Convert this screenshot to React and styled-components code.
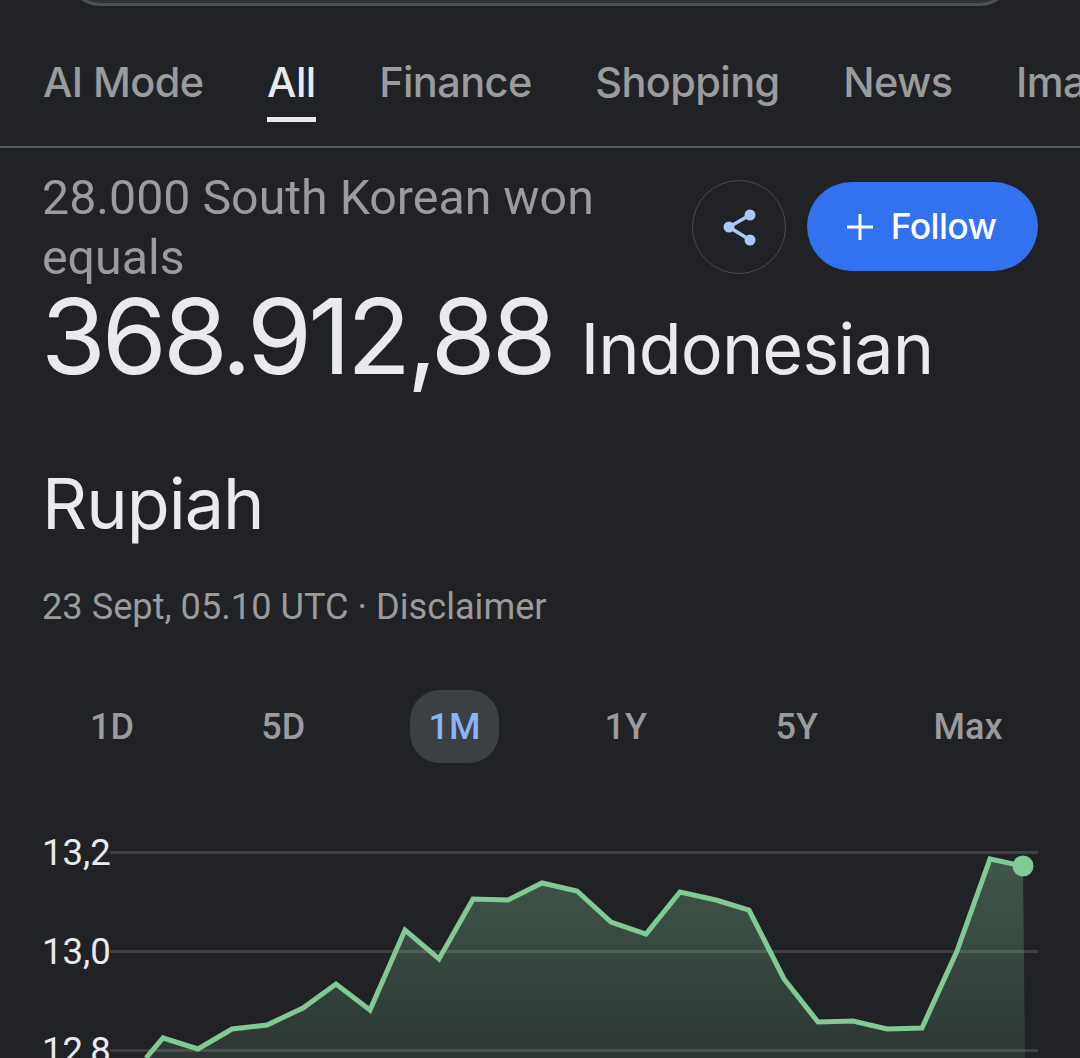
import styled, { createGlobalStyle } from "styled-components";

const tabs = ["AI Mode", "All", "Finance", "Shopping", "News", "Images"];
const ranges = ["1D", "5D", "1M", "1Y", "5Y", "Max"];
const axisLabels = ["13,2", "13,0", "12,8"];

const points = [
  [146, 1057], [163, 1037], [198, 1048], [232, 1028], [267, 1024], [303, 1007],
  [336, 983], [370, 1009], [405, 929], [439, 958], [473, 898], [508, 899],
  [542, 882], [577, 890], [611, 921], [646, 933], [680, 891], [716, 899],
  [749, 909], [784, 978], [818, 1021], [853, 1020], [887, 1028], [922, 1027],
  [957, 950], [990, 858], [1023, 865],
];

// chart svg starts at y=820
const linePoints = points.map(([x, y]) => `${x},${y - 820}`).join(" ");
const areaPoints = `146,238 ${linePoints} 1025,238`;

function ShareIcon() {
  return (
    <svg width="36" height="40" viewBox="0 0 36 40" fill="#a8c7fa">
      <path d="M8 20 L29 8 M8 20 L29 33" stroke="#a8c7fa" strokeWidth="3.5" fill="none" />
      <circle cx="8" cy="20" r="5.5" />
      <circle cx="29" cy="8" r="5.5" />
      <circle cx="29" cy="33" r="5.5" />
    </svg>
  );
}

function PlusIcon() {
  return (
    <svg width="26" height="26" viewBox="0 0 26 26">
      <path d="M13 0 V26 M0 13 H26" stroke="#fff" strokeWidth="3" />
    </svg>
  );
}

function App() {
  return (
    <Page>
      <GlobalStyle />
      <SearchBox />

      <TabBar>
        {tabs.map((tab) => (
          <Tab key={tab} $active={tab === "All"}>
            {tab}
          </Tab>
        ))}
      </TabBar>

      <Content>
        <Header>
          <Subtitle>28.000 South Korean won equals</Subtitle>
          <Actions>
            <ShareButton>
              <ShareIcon />
            </ShareButton>
            <FollowButton>
              <PlusIcon />
              Follow
            </FollowButton>
          </Actions>
        </Header>

        <Result>
          <Amount>368.912,88</Amount> <Currency>Indonesian Rupiah</Currency>
        </Result>

        <Timestamp>23 Sept, 05.10 UTC · Disclaimer</Timestamp>
      </Content>

      <RangeRow>
        {ranges.map((range) => (
          <RangeCell key={range}>
            <RangeItem $active={range === "1M"}>{range}</RangeItem>
          </RangeCell>
        ))}
      </RangeRow>

      <Chart>
        <AxisRows>
          {axisLabels.map((label) => (
            <AxisRow key={label}>
              <AxisLabel>{label}</AxisLabel>
              <GridLine />
            </AxisRow>
          ))}
        </AxisRows>
        <Plot width="1080" height="238" viewBox="0 0 1080 238">
          <defs>
            <linearGradient id="area" x1="0" y1="0" x2="0" y2="1">
              <stop offset="0" stopColor="#81c995" stopOpacity="0.32" />
              <stop offset="1" stopColor="#81c995" stopOpacity="0.12" />
            </linearGradient>
          </defs>
          <polygon points={areaPoints} fill="url(#area)" />
          <polyline points={linePoints} fill="none" stroke="#81c995" strokeWidth="5" strokeLinejoin="miter" />
          <circle cx="1023" cy="45" r="10.5" fill="#81c995" />
        </Plot>
      </Chart>
    </Page>
  );
}

export default App;

const GlobalStyle = createGlobalStyle`
  html, body {
    margin: 0;
    height: 100%;
    background: #212226;
    overflow: hidden;
  }
`;

const Page = styled.div`
  width: 1080px;
  height: 1058px;
  overflow: hidden;
  background: #212226;
  font-family: Roboto, sans-serif;
`;

const SearchBox = styled.div`
  height: 40px;
  margin: -34px 65px 0 65px;
  box-sizing: border-box;
  background: #303236;
  border: 3px solid #4b4e52;
  border-radius: 0 0 36px 36px;
`;

const TabBar = styled.div`
  display: flex;
  gap: 63.5px;
  height: 142px;
  box-sizing: border-box;
  padding: 0 0 0 43px;
  border-bottom: 2px solid #55585c;
  overflow: hidden;
  white-space: nowrap;
`;

const Tab = styled.div`
  position: relative;
  padding-top: 51px;
  font-family: Inter, sans-serif;
  font-size: 41.5px;
  line-height: 50px;
  letter-spacing: -0.6px;
  font-weight: 500;
  color: ${(p) => (p.$active ? "#e8eaed" : "#9a9b9d")};

  &::after {
    content: "";
    display: ${(p) => (p.$active ? "block" : "none")};
    position: absolute;
    left: 0;
    right: 0;
    bottom: 24px;
    height: 5px;
    background: #e8eaed;
  }
`;

const Content = styled.div`
  padding: 0 42px;
`;

const Header = styled.div`
  display: flex;
  justify-content: space-between;
  padding-top: 20px;
`;

const Subtitle = styled.div`
  width: 600px;
  font-size: 48.3px;
  line-height: 60px;
  color: #9a9b9d;
`;

const Actions = styled.div`
  display: flex;
  align-items: flex-start;
  gap: 21px;
  padding-top: 12px;
`;

const ShareButton = styled.div`
  width: 94px;
  height: 94px;
  box-sizing: border-box;
  border: 1.5px solid #4a4c50;
  border-radius: 50%;
  display: flex;
  align-items: center;
  justify-content: center;
`;

const FollowButton = styled.div`
  width: 229px;
  height: 89px;
  margin-top: 2px;
  padding-right: 2px;
  border-radius: 45px;
  background: #3271f0;
  color: #fff;
  display: flex;
  align-items: center;
  justify-content: center;
  gap: 18px;
  font-family: Inter, sans-serif;
  font-size: 35.5px;
  font-weight: 500;
  letter-spacing: -0.6px;
`;

const Result = styled.div`
  margin-top: -17px;
  color: #e8eaed;
  font-family: Inter, sans-serif;
  font-size: 70.2px;
  line-height: 155px;
`;

const Amount = styled.span`
  font-size: 105px;
  line-height: 1;
  letter-spacing: -4px;
  margin-left: -1px;
`;

const Currency = styled.span`
  font-size: 70.2px;
  letter-spacing: -1px;
  margin-left: 8px;
`;

const Timestamp = styled.div`
  margin-top: 1px;
  font-size: 36.2px;
  line-height: 50px;
  color: #9a9b9d;
`;

const RangeRow = styled.div`
  display: grid;
  grid-template-columns: repeat(6, 171.2px);
  padding: 58px 0 0 26.5px;
`;

const RangeCell = styled.div`
  display: flex;
  justify-content: center;
`;

const RangeItem = styled.div`
  width: 89px;
  height: 73px;
  border-radius: 30px;
  display: flex;
  align-items: center;
  justify-content: center;
  font-size: 36px;
  font-weight: 500;
  background: ${(p) => (p.$active ? "#3c4043" : "transparent")};
  color: ${(p) => (p.$active ? "#8ab4f8" : "#9a9b9d")};
`;

const Chart = styled.div`
  position: relative;
  margin-top: 58px;
  height: 238px;
`;

const AxisRows = styled.div`
  display: flex;
  flex-direction: column;
  padding: 6px 42px 0 42px;
`;

const AxisRow = styled.div`
  display: flex;
  align-items: center;
  height: 50px;
  margin-bottom: 49px;
`;

const AxisLabel = styled.div`
  width: 68px;
  font-size: 36.6px;
  color: #e8eaed;
`;

const GridLine = styled.div`
  flex: 1;
  height: 3px;
  background: #3e4044;
`;

const Plot = styled.svg`
  position: absolute;
  left: 0;
  top: 0;
`;
